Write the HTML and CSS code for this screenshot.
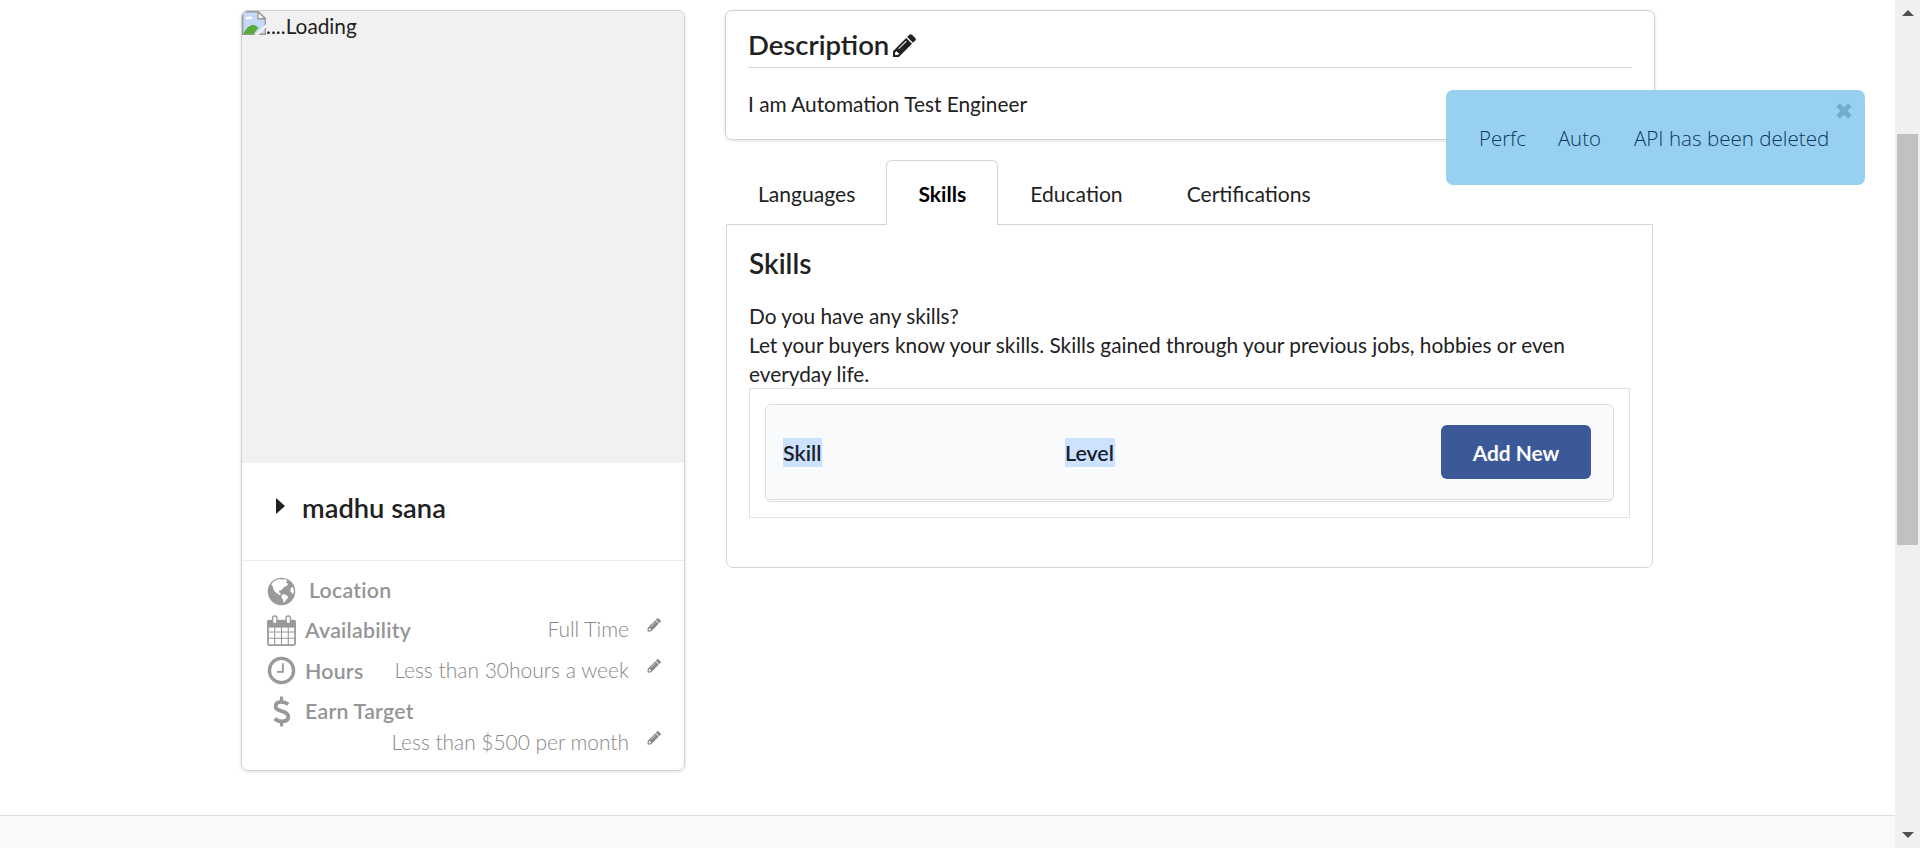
FILE: index.html
```html
<!DOCTYPE html>
<html lang="en">
<head>
<meta charset="utf-8">
<title>Profile</title>
<link rel="stylesheet" href="styles.css">
</head>
<body>
<svg class="defs" width="0" height="0">
  <symbol id="pencil" viewBox="0 0 24 24">
    <path fill-rule="evenodd" d="M1 17.2 14.2 4 20 9.8 6.8 23H1ZM3 18.6v2.5h2.8l1.4-1.4-2.8-2.5ZM14 6.700 6.300 14.400l.7.7L14.700 7.400Z"/>
    <path d="m15.200 3 2.300-2.300q1.200-1.100 2.400 0l3.400 3.400q1.100 1.200 0 2.400L21 8.800Z"/>
  </symbol>
</svg>
<div class="window">
  <div class="page">
    <main class="content">
      <section class="profile">
        <div class="photo">
          <svg class="broken" viewBox="0 0 24 24"><path d="M.7.7h15.600l7 6.600v16H.7Z" fill="#c5d8f5" stroke="#999" stroke-width="1.400"/><path d="M16 .7v7h7.300Z" fill="#fff" stroke="#999" stroke-width="1.400"/><path d="M3 8q1-3 3.500-2Q9 4 10.500 8Z" fill="#fff"/><path d="M1.400 23q3-8 9-9 4-.2 6 3l-5 6Z" fill="#5aaa3c"/><path d="m12 24 12-11v3.500L16.500 24Z" fill="#f1f1f1"/></svg><span>....Loading</span>
        </div>
        <div class="name"><svg class="caret" viewBox="0 0 9 16"><path d="M0 0 9 8 0 16Z"/></svg><h2>madhu sana</h2></div>
        <div class="facts">
          <div class="fact location">
            <svg class="glyph" viewBox="0 0 30 30"><circle cx="15" cy="15" r="13.300" fill="#999"/><path fill="#fff" d="M7 5.800Q10 3.300 13 2.800l2.500.7 3-.5 2 1.200-1 2 2 1.500-1.500 2-2.500 1-2.500 3-2 .3-.5 1.700 2 1.500-1 1.500-2.500-1.500-2.500-2-1.500-2.500-.5-3-1.500-1.500ZM15 18.500l2.500-1 3 1.500 1 2-2 2-1 2-1.500 1-.5-3-1.500-2ZM24 11.500l1.500-1 1.200 2 .3 3-1 2.500-1.500-2-1-1.500Z"/></svg>
            <b>Location</b>
          </div>
          <div class="fact">
            <svg class="glyph cal" viewBox="0 0 30 32"><path fill="none" stroke="#999" stroke-width="1.800" d="M1 6.500h28v23q0 1.500-1.500 1.500h-25Q1 31 1 29.500Z"/><path fill="#999" d="M1 5h28v8H1Z"/><path stroke="#999" stroke-width="1.100" d="M1 17.500h28M1 24h28M8 12v19M15 12v19M22 12v19"/><g fill="#fff" stroke="#999" stroke-width="1.400"><rect x="5.800" y="1" width="4.500" height="8" rx="2"/><rect x="19.700" y="1" width="4.500" height="8" rx="2"/></g></svg>
            <b>Availability</b><span class="value">Full Time</span><svg class="edit"><use href="#pencil"/></svg>
          </div>
          <div class="fact">
            <svg class="glyph" viewBox="0 0 30 30"><circle cx="15" cy="15" r="11.700" fill="none" stroke="#999" stroke-width="3.200"/><path fill="none" stroke="#999" stroke-width="1.800" d="M16.300 8v8.300h-5.800"/></svg>
            <b>Hours</b><span class="value">Less than 30hours a week</span><svg class="edit"><use href="#pencil"/></svg>
          </div>
          <div class="fact">
            <svg class="glyph" viewBox="0 0 30 32"><path fill="none" stroke="#999" stroke-width="4" d="M22 8.500Q18.500 6 15 6q-6 0-6 4.500 0 3.500 6 5 7 1.700 7 6 0 4.800-7 4.800-4 0-7-3"/><path stroke="#999" stroke-width="3.200" d="M15 .5V6m0 20v5.500"/></svg>
            <b>Earn Target</b>
          </div>
          <div class="fact last"><span class="value">Less than $500 per month</span><svg class="edit"><use href="#pencil"/></svg></div>
        </div>
      </section>
      <div class="details">
        <section class="description">
          <h3>Description<svg class="edit-title"><use href="#pencil"/></svg></h3>
          <p>I am Automation Test Engineer</p>
        </section>
        <nav class="tabs"><a>Languages</a><a class="active">Skills</a><a>Education</a><a>Certifications</a></nav>
        <section class="panel">
          <h3>Skills</h3>
          <p>Do you have any skills?<br>Let your buyers know your skills. Skills gained through your previous jobs, hobbies or even<br>everyday life.</p>
          <div class="frame">
            <div class="table">
              <div class="row"><span class="col"><mark>Skill</mark></span><span class="col"><mark>Level</mark></span><button>Add New</button></div>
            </div>
          </div>
        </section>
      </div>
    </main>
    <footer class="footer"></footer>
  </div>
  <div class="scrollbar">
    <svg class="arrow" viewBox="0 0 12 6"><path d="M6 0l6 6H0Z"/></svg>
    <div class="track"><div class="thumb"></div></div>
    <svg class="arrow" viewBox="0 0 12 6"><path d="M0 0h12L6 6Z"/></svg>
  </div>
</div>
<div class="toast"><span>Perfc</span><span>Auto</span><span class="message">API has been deleted</span><svg class="close" viewBox="0 0 18 18"><path d="m3 3 12 12M15 3 3 15"/></svg></div>
</body>
</html>
```
FILE: styles.css
```css
* { box-sizing: border-box; }
body { margin: 0; font: 20.82px/29.2px Lato, sans-serif; color: #212122; background: #fff; overflow: hidden; }
h2, h3, p { margin: 0; }
svg { display: block; flex: none; }
.defs { position: absolute; }
.window { display: flex; height: 848px; }
.page { flex: 1; display: flex; flex-direction: column; }
.content { flex: 1; display: flex; align-items: flex-start; gap: 40px; padding: 10px 0 0 241px; }
.footer { height: 33px; border-top: 1px solid #dededf; background: #f9f9f9; }

.profile { width: 444px; height: 761px; border: 1px solid #d0d1d2; border-radius: 7px; box-shadow: 0 1px 2px 1px #d4d4d566; overflow: hidden; }
.photo { height: 452px; display: flex; background: #f1f1f1; }
.broken { width: 24px; height: 24px; }
.name { display: flex; height: 98px; padding: 35px 0 0 34px; border-bottom: 1px solid #ececec; }
.caret { width: 9px; height: 16px; fill: #212122; }
.name h2 { margin-left: 17px; font-size: 27.300px; line-height: 20px; font-weight: 600; white-space: nowrap; }
.facts { padding: 12px 23px 0 24px; color: #959595; }
.fact { display: flex; align-items: center; height: 40.600px; }
.fact b { margin: 1px 0 0 8px; font-weight: 600; font-size: 21.300px; letter-spacing: .25px; }
.location { height: 37px; }
.location b { margin: -2px 0 0 12px; }
.glyph { width: 31px; height: 31px; }
.value { margin: -3px 0 0 auto; font-weight: 300; font-size: 21px; color: #888; }
.edit { width: 14px; height: 14px; margin: -10px 0 0 18px; fill: #888; }
.last { height: 22px; }
.last .value { font-size: 20.900px; }

.details { width: 930px; }
.description { height: 130px; padding: 17px 22px; border: 1px solid #d0d1d2; border-radius: 7px; box-shadow: 0 1px 2px 1px #d4d4d566; }
h3 { font-size: 27.500px; line-height: 34px; font-weight: 600; }
.description h3 { display: flex; height: 40px; border-bottom: 1px solid #d5d5d5; }
.edit-title { width: 24px; height: 24px; margin: 6px 0 0 3px; fill: #212122; }
.description p { margin-top: 21px; }
.tabs { display: flex; height: 65px; margin: 20px 0 0 1px; font-size: 21.100px; }
.tabs a { padding: 18px 31px; border: 1px solid transparent; border-bottom: 0; }
.tabs a:first-child { padding-right: 30px; }
.tabs .active { background: #fff; border-color: #d4d4d5; border-radius: 6px 6px 0 0; font-weight: 700; color: #000; z-index: 1; }
.panel { width: 927px; height: 344px; margin: -1px 0 0 1px; padding: 21px 22px; border: 1px solid #d4d4d5; border-radius: 0 0 7px 7px; }
.panel h3 { font-size: 28px; }
.panel p { height: 87px; margin-top: 21px; white-space: nowrap; }
.frame { width: 881px; height: 130px; padding: 15px; border: 1px solid #e2e2e3; }
.table { height: 98px; padding-bottom: 1px; border: 1px solid #dcdddf; border-radius: 6px; background: #fff; }
.row { display: flex; align-items: center; height: 95px; padding: 0 22px 0 17px; background: #f9fafb; border-bottom: 1px solid #dddddf; border-radius: 5px 5px 3px 3px; }
.col { width: 282px; padding-top: 1px; font-weight: 600; font-size: 21.400px; }
mark { display: block; width: fit-content; padding-right: 1px; line-height: 28px; padding-top: 1px; background: #cce2ff; color: #18202c; }
button { width: 150px; height: 54px; margin-left: auto; padding: 0; border: 0; border-radius: 6px; background: #3b5998; color: #fff; font: 700 20.900px Lato, sans-serif; }

.scrollbar { width: 25px; padding: 10px 0; display: flex; flex-direction: column; align-items: center; background: #f0f0f0; }
.arrow { width: 12px; height: 6px; fill: #505050; }
.track { flex: 1; padding-top: 118px; }
.thumb { width: 21px; height: 411px; background: #c1c1c1; }
.toast { position: absolute; left: 1446px; top: 90px; width: 419px; height: 95px; padding: 34px 33px; display: flex; gap: 32px; border-radius: 7px; background: #98d1f0; color: #0e3660; font: 300 20.400px/29px "Open Sans", sans-serif; white-space: nowrap; }
.toast .message { margin-left: 1px; font-size: 20.600px; }
.close { position: absolute; right: 12px; top: 12px; width: 18px; height: 18px; stroke: #70aed0; stroke-width: 5; }
```
